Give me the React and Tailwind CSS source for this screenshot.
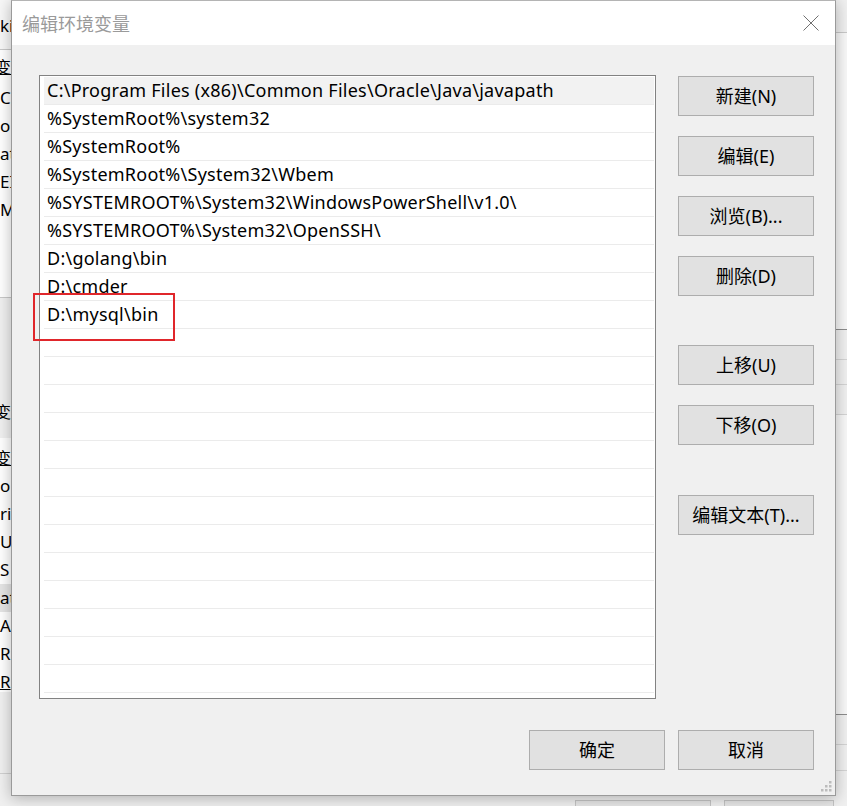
import React from "react";

const PATHS = [
  "C:\\Program Files (x86)\\Common Files\\Oracle\\Java\\javapath",
  "%SystemRoot%\\system32",
  "%SystemRoot%",
  "%SystemRoot%\\System32\\Wbem",
  "%SYSTEMROOT%\\System32\\WindowsPowerShell\\v1.0\\",
  "%SYSTEMROOT%\\System32\\OpenSSH\\",
  "D:\\golang\\bin",
  "D:\\cmder",
  "D:\\mysql\\bin",
];

const ROW_COUNT = 22;

function WinButton({ children, className = "" }) {
  return (
    <button
      className={`h-[40px] w-[136px] border border-[#adadad] bg-[#e1e1e1] text-[18px] text-black leading-none ${className}`}
    >
      {children}
    </button>
  );
}

function CloseIcon() {
  return (
    <svg width="16" height="16" viewBox="0 0 16 16" className="text-[#707070]">
      <path d="M0.5 0.5 L15.5 15.5 M15.5 0.5 L0.5 15.5" stroke="currentColor" strokeWidth="1" fill="none" />
    </svg>
  );
}

function Grip() {
  const dots = [
    [8, 0],
    [4, 4],
    [8, 4],
    [0, 8],
    [4, 8],
    [8, 8],
  ];
  return (
    <svg width="11" height="11" viewBox="0 0 11 11">
      {dots.map(([x, y]) => (
        <rect key={`${x}-${y}`} x={x} y={y} width="2.5" height="2.5" fill="#bcbcbc" />
      ))}
    </svg>
  );
}

// the window behind the dialog only shows a thin strip on each side
function LeftStrip() {
  const top = ["C", "on", "at", "EI", "M"];
  const bottom = ["o", "ri", "U", "S", "at", "A", "R", "R"];
  return (
    <div className="w-[11px] h-full overflow-hidden flex flex-col text-[17px] text-black whitespace-nowrap">
      <div className="h-[50px] bg-[#f7f7f7] border-b border-[#c8c8c8] flex items-center pt-[2px]">ki</div>
      <div className="h-[248px] bg-white border-b border-[#c8c8c8]">
        <div className="h-[34px] flex items-center underline text-[16px] ml-[-5px]">变量</div>
        {top.map((t, i) => (
          <div key={i} className="h-[28px] flex items-center">{t}</div>
        ))}
      </div>
      <div className="h-[140px] bg-[#f0f0f0] pt-[102px] text-[16px] ml-[-5px]">変</div>
      <div className="h-[254px] bg-white">
        <div className="h-[34px] flex items-end pb-[2px] underline text-[16px] ml-[-5px]">变量</div>
        {bottom.map((t, i) => (
          <div key={i} className={`h-[28px] flex items-center ${i === 4 ? "bg-[#e5e5e5]" : ""} ${i === 7 ? "underline" : ""}`}>
            {t}
          </div>
        ))}
      </div>
      <div className="h-[82px] border-b border-[#d0d0d0]" />
    </div>
  );
}

function RightStrip() {
  return (
    <div className="w-[11px] h-full overflow-hidden flex flex-col">
      <div className="h-[33px] border-b border-[#c8c8c8]" />
      <div className="h-[297px] bg-[#f8f8f8] border-b border-[#8c8c8c]" />
      <div className="h-[30px] border-b border-[#d4d4d4]" />
      <div className="h-[25px] border-b border-[#d4d4d4]" />
      <div className="h-[30px] border-b border-[#d4d4d4]" />
      <div className="h-[300px] bg-[#f8f8f8] border-b border-[#8c8c8c]" />
      <div className="h-[30px] border-b border-[#d4d4d4]" />
      <div className="h-[26px] border-b border-[#d4d4d4]" />
      <div className="flex-1" />
    </div>
  );
}

function Dialog() {
  return (
    <div className="absolute left-[11px] top-0 w-[825px] h-[796px] flex flex-col border border-[#9a9a9a] border-t-[#b4b4b4] bg-[#f0f0f0] shadow-[0_2px_14px_rgba(0,0,0,0.28)]">
      <div className="h-[44px] shrink-0 bg-white flex items-center justify-between pl-[10px] pr-[16px]">
        <span className="text-[18px] text-[#9a9a9a] font-['Noto_Sans_CJK_SC',sans-serif]">编辑环境变量</span>
        <CloseIcon />
      </div>
      <div className="relative flex-1 flex flex-col pl-[27px] pr-[21px] pt-[30px]">
        <div className="flex">
          <div className="w-[617px] h-[624px] border border-[#828282] bg-white pt-[1px] pl-[4px] pr-[1px]">
            {Array.from({ length: ROW_COUNT }).map((_, i) => (
              <div
                key={i}
                className={`h-[28px] border-b border-[#ebebeb] pl-[3px] flex items-center text-[18px] tracking-[0.25px] text-black whitespace-nowrap ${
                  i === 0 ? "bg-[#f2f2f2]" : ""
                }`}
              >
                {PATHS[i] ?? ""}
              </div>
            ))}
          </div>
          <div className="ml-[22px] flex flex-col pt-[1px]">
            <WinButton>新建(N)</WinButton>
            <WinButton className="mt-[20px]">编辑(E)</WinButton>
            <WinButton className="mt-[20px]">浏览(B)...</WinButton>
            <WinButton className="mt-[20px]">删除(D)</WinButton>
            <WinButton className="mt-[49px]">上移(U)</WinButton>
            <WinButton className="mt-[20px]">下移(O)</WinButton>
            <WinButton className="mt-[50px]">编辑文本(T)...</WinButton>
          </div>
        </div>
        <div className="flex justify-end gap-[13px] mt-[31px]">
          <WinButton>确定</WinButton>
          <WinButton>取消</WinButton>
        </div>
        <div className="absolute left-[21px] top-[248px] w-[142px] h-[48px] border-2 border-[#e0262b]" />
        <div className="absolute right-[3px] bottom-[3px]">
          <Grip />
        </div>
      </div>
    </div>
  );
}

export default function App() {
  return (
    <div className="relative w-[847px] h-[806px] overflow-hidden bg-[#f0f0f0] font-['Noto_Sans','Noto_Sans_CJK_SC',sans-serif]">
      <div className="flex h-full">
        <LeftStrip />
        <div className="flex-1 flex flex-col justify-end">
          <div className="flex justify-end gap-[13px] pr-[2px] mb-[-34px]">
            <div className="w-[136px] h-[40px] border border-[#c4c4c4] bg-[#e6e6e6]" />
            <div className="w-[110px] h-[40px] border border-[#c4c4c4] bg-[#e6e6e6]" />
          </div>
        </div>
        <RightStrip />
      </div>
      <Dialog />
    </div>
  );
}
